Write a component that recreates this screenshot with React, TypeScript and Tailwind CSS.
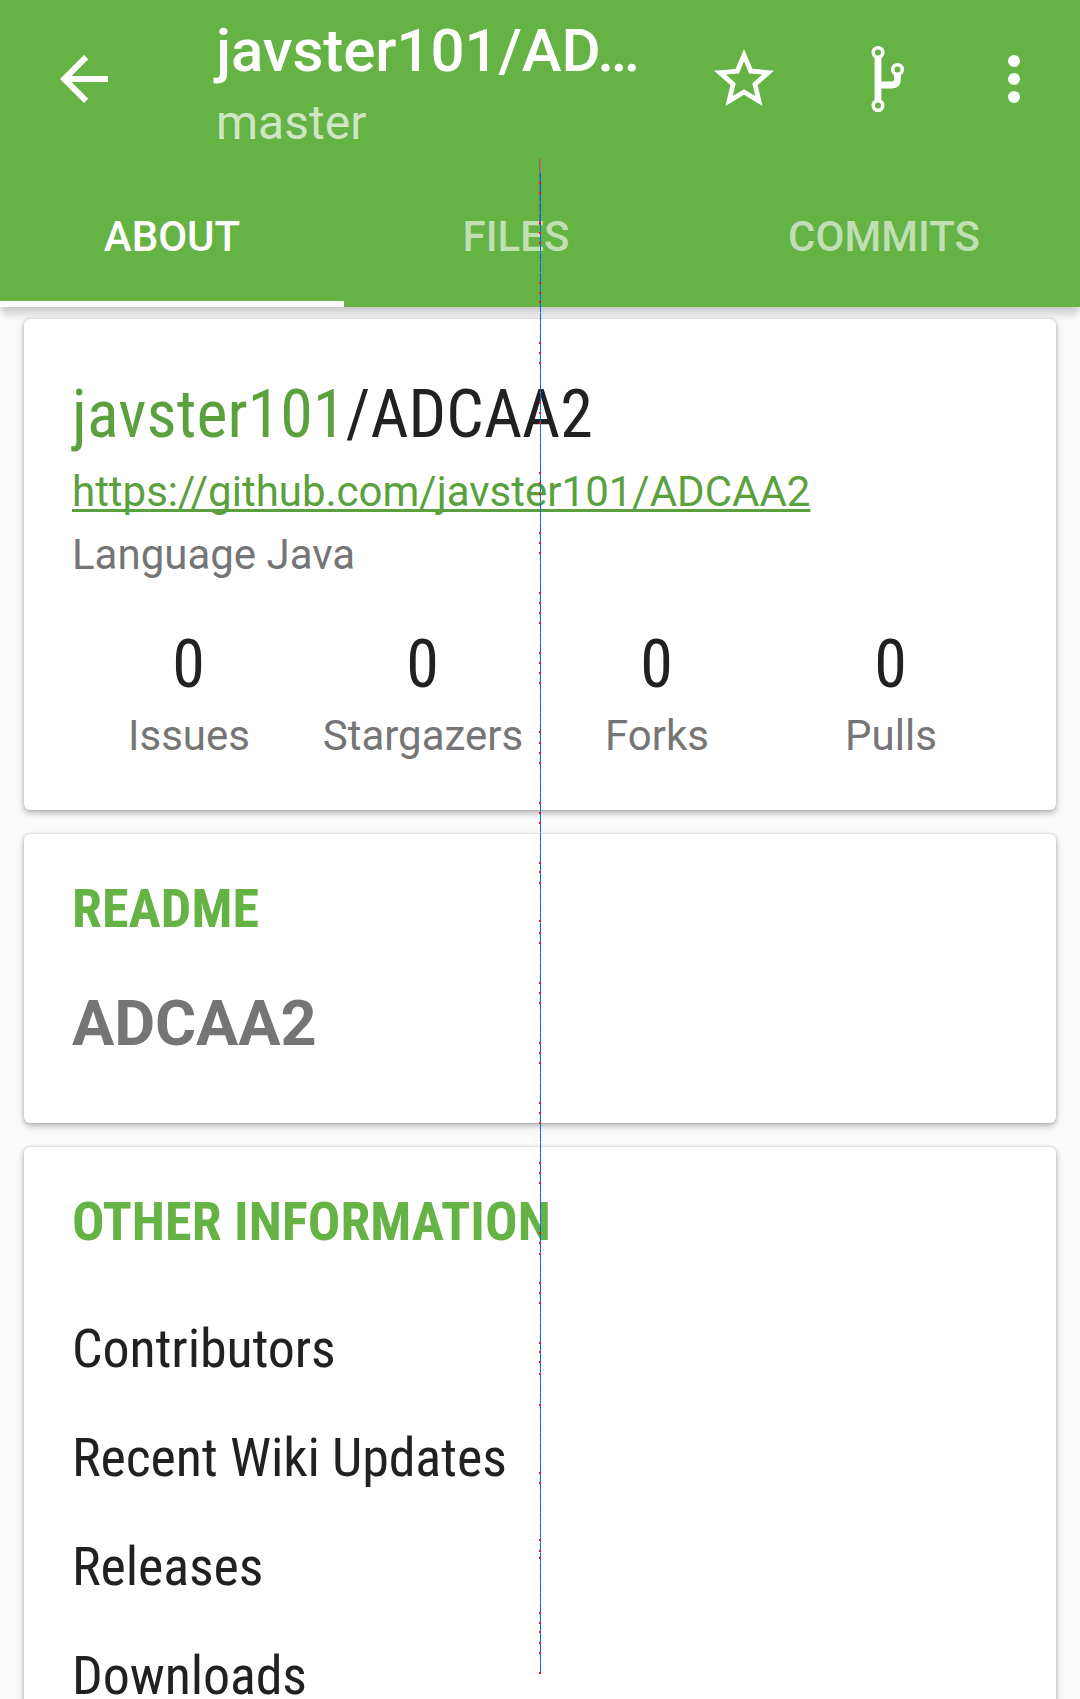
import React from "react";

const condensed = "[font-stretch:75%]";

const stats = [
  { value: "0", label: "Issues" },
  { value: "0", label: "Stargazers" },
  { value: "0", label: "Forks" },
  { value: "0", label: "Pulls" },
];

const links = ["Contributors", "Recent Wiki Updates", "Releases", "Downloads"];

const marks = [
  183, 193, 223, 233, 243, 283, 293, 302, 343, 353, 363, 403, 413, 423, 473, 483, 494, 533, 543, 553, 593, 603, 613,
  623, 653, 663, 673, 683, 732, 743, 753, 763, 803, 813, 823, 863, 872, 883, 921, 933, 943, 983, 993, 1003, 1043, 1053,
  1063, 1103, 1113, 1123, 1163, 1173, 1183, 1233, 1243, 1254, 1283, 1293, 1303, 1343, 1352, 1362, 1374, 1405, 1473,
  1483, 1540, 1551, 1558, 1613, 1623, 1632, 1643, 1653, 1673,
];

function ForkIcon() {
  return (
    <svg width="72" height="72" viewBox="0 0 72 72" fill="none" stroke="white">
      <path d="M26 15V57M26 42H40Q45.5 42 45.5 36V32" strokeWidth="6.8" />
      <g strokeWidth="3.5" fill="#65b245">
        <circle cx="26" cy="9.5" r="4.8" />
        <circle cx="26" cy="62.5" r="4.8" />
        <circle cx="45.5" cy="26.5" r="4.8" />
      </g>
    </svg>
  );
}

function Header() {
  return (
    <header className="relative z-10 h-[307px] bg-[#65b245] text-white shadow-[0_3px_8px_rgba(0,0,0,0.16),0_12px_6px_-2px_rgba(0,0,0,0.08)]">
      <div className="flex h-[163px]">
        <svg className="mt-[43px] ml-12 shrink-0" width="72" height="72" viewBox="0 0 24 24" fill="white">
          <path d="M20 11H7.83l5.59-5.59L12 4l-8 8 8 8 1.41-1.41L7.83 13H20v-2z" />
        </svg>
        <div className="ml-24 w-[444px] pt-4">
          <h1 className="text-[60px] leading-[70px] font-medium tracking-[-0.08px] whitespace-nowrap">javster101/AD…</h1>
          <p className="mt-[9px] text-[48px] leading-[56px] text-white/70">master</p>
        </div>
        <div className="mt-[43px] ml-12 flex">
          <svg className="mr-[72px]" width="72" height="72" viewBox="0 0 24 24" fill="white">
            <path d="M22 9.24l-7.19-.62L12 2 9.19 8.63 2 9.24l5.46 4.73L5.82 21 12 17.27 18.18 21l-1.63-7.03L22 9.24zM12 15.4l-3.76 2.27 1-4.28-3.32-2.88 4.38-.38L12 6.1l1.71 4.04 4.38.38-3.32 2.88 1 4.28L12 15.4z" />
          </svg>
          <ForkIcon />
          <svg className="ml-[54px]" width="72" height="72" viewBox="0 0 24 24" fill="white">
            <circle cx="12" cy="6" r="2" />
            <circle cx="12" cy="12" r="2" />
            <circle cx="12" cy="18" r="2" />
          </svg>
        </div>
      </div>
      <nav className="grid h-36 grid-cols-[344px_344px_392px] text-center text-[42px] leading-[50px] font-medium">
        <div className="border-b-[6px] border-white pt-[49px]">ABOUT</div>
        <div className="pt-[49px] text-white/60">FILES</div>
        <div className="pt-[49px] text-white/60">COMMITS</div>
      </nav>
    </header>
  );
}

function Card({ className, children }: { className: string; children: React.ReactNode }) {
  return (
    <section
      className={`relative rounded-[6px] bg-white px-12 shadow-[0_0_3px_rgba(0,0,0,0.16),0_3px_6px_rgba(0,0,0,0.28)] ${className}`}
    >
      {children}
    </section>
  );
}

export default function App() {
  return (
    <div className="relative h-[1699px] w-[1080px] overflow-hidden bg-[#fafafa] font-['Roboto',sans-serif] text-[#212121]">
      <Header />
      <main className="flex flex-col gap-6 px-6 pt-3">
        <Card className="z-20 h-[491px] pt-[57px]">
          <h2 className={`text-[66px] leading-[78px] tracking-[0.12px] ${condensed}`}>
            <span className="text-[#5aa13d]">javster101</span>/ADCAA2
          </h2>
          <p className="mt-[13px] text-[42px] leading-[50px] text-[#5aa13d] underline decoration-[3px] underline-offset-[3px] [text-decoration-skip-ink:none]">
            https://github.com/javster101/ADCAA2
          </p>
          <p className="mt-[13px] text-[42px] leading-[50px] text-[#757575]">Language Java</p>
          <div className="mt-[46px] grid grid-cols-4 text-center">
            {stats.map((s) => (
              <div key={s.label}>
                <div className={`pr-px text-[66px] leading-[78px] ${condensed}`}>{s.value}</div>
                <div className="mt-[7px] text-[42px] leading-[50px] text-[#757575]">{s.label}</div>
              </div>
            ))}
          </div>
        </Card>
        <Card className="h-[289px] pt-[43px]">
          <h3 className={`text-[54px] leading-[64px] font-bold tracking-[0.08px] text-[#65b245] ${condensed}`}>
            README
          </h3>
          <p className="mt-[46px] text-[63px] leading-[74px] font-bold tracking-[-0.15px] text-[#757575]">ADCAA2</p>
        </Card>
        <Card className="h-[600px] pt-[43px]">
          <h3 className={`text-[54px] leading-[64px] font-bold tracking-[0.08px] text-[#65b245] ${condensed}`}>
            OTHER INFORMATION
          </h3>
          <ul className={`mt-[40px] text-[54px] leading-[109px] tracking-[-0.12px] ${condensed}`}>
            {links.map((l) => (
              <li key={l}>{l}</li>
            ))}
          </ul>
        </Card>
      </main>
      <div className="absolute top-[159px] left-[539px] z-30 h-[1515px] w-[2px]">
        <div className="absolute top-0 left-0 h-[66px] w-px bg-[#5f8550]" />
        <div className="ml-px h-[14px] w-px bg-[#c9617a]" />
        <div className="ml-px h-[1501px] w-px bg-[repeating-linear-gradient(to_bottom,#0a62f0_0px,#0a62f0_9px,#3cb4f0_9px,#3cb4f0_10px)]" />
        {marks.map((y) => (
          <div key={y} className="absolute left-0 size-[2px] bg-[#f01020]" style={{ top: y - 160 }} />
        ))}
      </div>
    </div>
  );
}
